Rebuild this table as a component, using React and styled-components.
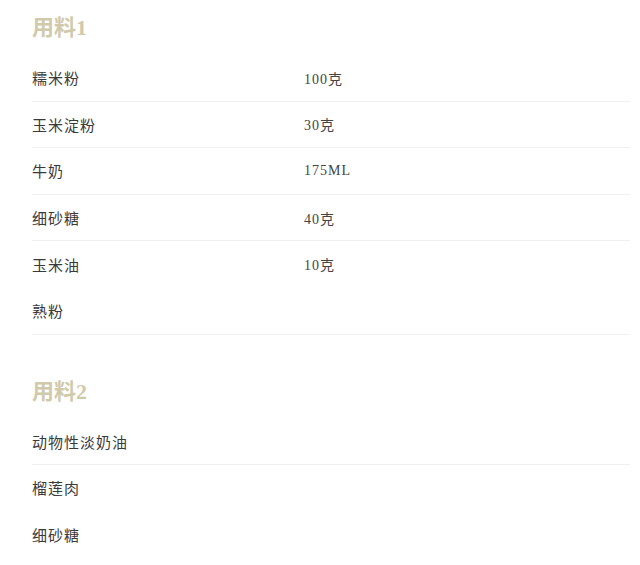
import * as React from 'react';
import styled, { createGlobalStyle } from 'styled-components';

const GlobalStyle = createGlobalStyle`
  body {
    margin: 0;
    background: #ffffff;
    font-family: 'Noto Sans CJK SC', 'Noto Sans', sans-serif;
  }
`;

const Page = styled.div`
  padding: 0 10px 0 32px;
`;

const Section = styled.section`
  margin-top: ${(p) => (p.$first ? '0' : '29px')};
`;

const Title = styled.h2`
  margin: 0;
  height: 55px;
  padding-top: 17px;
  box-sizing: border-box;
  font-family: 'Liberation Serif', 'Noto Sans CJK SC', serif;
  font-size: 22px;
  line-height: 22px;
  font-weight: 600;
  color: #d0caab;
`;

const Row = styled.div`
  display: grid;
  grid-template-columns: 272px 1fr;
  align-items: center;
  height: 45.6px;
  border-bottom: 1px solid ${(p) => (p.$line ? '#f0f0f0' : 'transparent')};
`;

const Name = styled.span`
  font-size: 15px;
  letter-spacing: 1px;
  color: #3a3a3a;
`;

const Amount = styled.span`
  font-family: 'Liberation Serif', 'Noto Sans CJK SC', serif;
  font-size: 14px;
  letter-spacing: 1px;
  color: #444444;
`;

const sections = [
  {
    title: '用料1',
    rows: [
      ['糯米粉', '100克', true],
      ['玉米淀粉', '30克', true],
      ['牛奶', '175ML', true],
      ['细砂糖', '40克', true],
      ['玉米油', '10克', false],
      ['熟粉', '', true],
    ],
  },
  {
    title: '用料2',
    rows: [
      ['动物性淡奶油', '', true],
      ['榴莲肉', '', false],
      ['细砂糖', '', false],
    ],
  },
];

export default function App() {
  return (
    <Page>
      <GlobalStyle />
      {sections.map((s, i) => (
        <Section key={s.title} $first={i === 0}>
          <Title>{s.title}</Title>
          {s.rows.map(([name, amount, line]) => (
            <Row key={name} $line={line}>
              <Name>{name}</Name>
              <Amount>{amount}</Amount>
            </Row>
          ))}
        </Section>
      ))}
    </Page>
  );
}
